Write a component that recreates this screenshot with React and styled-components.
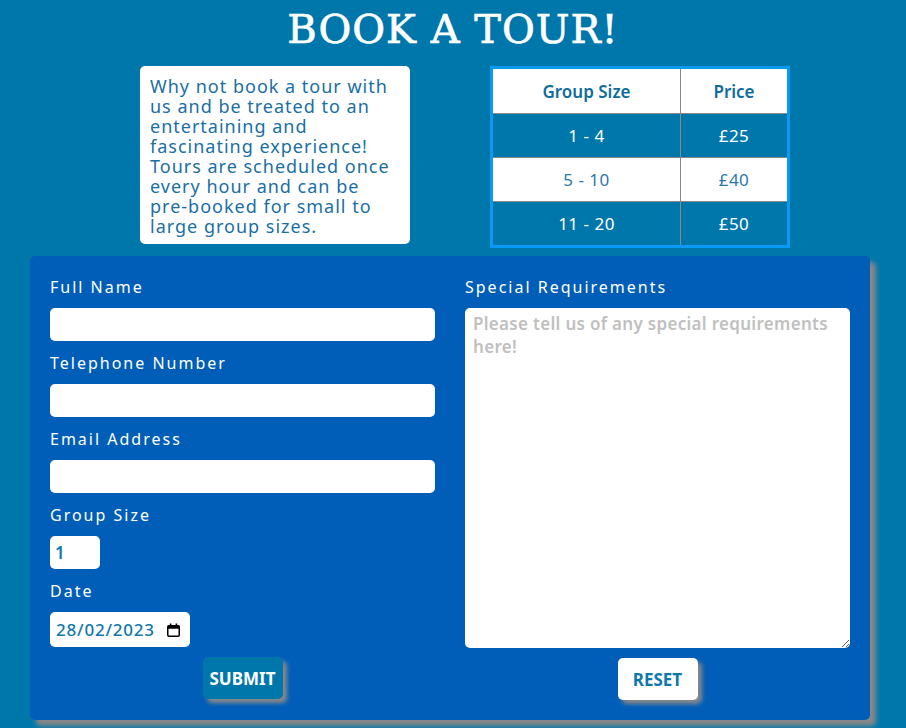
import React from "react";
import styled, { createGlobalStyle } from "styled-components";

const GlobalStyle = createGlobalStyle`
  body {
    margin: 0;
    background: #0077aa;
    font-family: "Noto Sans", "Open Sans", sans-serif;
  }
`;

const rates = [
  { size: "1 - 4", price: "£25" },
  { size: "5 - 10", price: "£40" },
  { size: "11 - 20", price: "£50" },
];

function CalendarIcon() {
  return (
    <svg width="13" height="14" viewBox="0 0 13 14">
      <rect x="0.75" y="2.75" width="11.5" height="10.5" rx="1.2" fill="none" stroke="#000" strokeWidth="1.5" />
      <rect x="0.75" y="2.75" width="11.5" height="3" fill="#000" />
      <rect x="2.8" y="0.5" width="1.6" height="3" fill="#000" />
      <rect x="8.6" y="0.5" width="1.6" height="3" fill="#000" />
    </svg>
  );
}

export default function App() {
  return (
    <Page>
      <GlobalStyle />
      <Title>BOOK A TOUR!</Title>

      <IntroRow>
        <InfoBox>
          Why not book a tour with us and be treated to an entertaining and
          fascinating experience! Tours are scheduled once every hour and can
          be pre&#8209;booked for small to large group sizes.
        </InfoBox>

        <PriceTable>
          <thead>
            <tr>
              <HeadCell>Group Size</HeadCell>
              <HeadCell>Price</HeadCell>
            </tr>
          </thead>
          <tbody>
            {rates.map((rate, index) => (
              <Row key={rate.size} $dark={index % 2 === 0}>
                <Cell>{rate.size}</Cell>
                <Cell>{rate.price}</Cell>
              </Row>
            ))}
          </tbody>
        </PriceTable>
      </IntroRow>

      <FormPanel>
        <Column>
          <Label>Full Name</Label>
          <TextInput type="text" />
          <Label>Telephone Number</Label>
          <TextInput type="tel" />
          <Label>Email Address</Label>
          <TextInput type="email" />
          <Label>Group Size</Label>
          <SmallInput type="text" defaultValue="1" />
          <Label>Date</Label>
          <DateField>
            <DateText type="text" defaultValue="28/02/2023" />
            <CalendarIcon />
          </DateField>
          <ButtonRow>
            <Button type="button">SUBMIT</Button>
          </ButtonRow>
        </Column>

        <Column>
          <Label>Special Requirements</Label>
          <Notes placeholder="Please tell us of any special requirements here!" />
          <ButtonRow>
            <Button type="button" $light>RESET</Button>
          </ButtonRow>
        </Column>
      </FormPanel>
    </Page>
  );
}

const Page = styled.div`
  padding-bottom: 8px;
`;

const Title = styled.h1`
  margin: 0;
  padding-top: 6px;
  height: 60px;
  box-sizing: border-box;
  text-align: center;
  font-family: "DejaVu Serif", "Liberation Serif", serif;
  font-weight: 400;
  font-size: 40px;
  letter-spacing: 1px;
  line-height: 46px;
  color: #fff;
  -webkit-text-stroke: 0.7px #fff;
`;

const IntroRow = styled.div`
  display: flex;
  justify-content: center;
  align-items: flex-start;
  gap: 80px;
  padding-left: 24px;
  margin-top: 6px;
`;

const InfoBox = styled.p`
  box-sizing: border-box;
  width: 270px;
  margin: 0;
  padding: 10px 6px 8px 10px;
  background: #fff;
  border-radius: 5px;
  color: #1a6fa3;
  font-size: 18px;
  line-height: 20px;
  letter-spacing: 1px;
`;

const PriceTable = styled.table`
  width: 300px;
  border-collapse: collapse;
  border: 3px solid #0a9af5;
  font-size: 17px;
`;

const HeadCell = styled.th`
  height: 44px;
  padding: 0;
  background: #fff;
  color: #0f6c9c;
  font-weight: 600;
  border-left: 1px solid #888;
  border-bottom: 1px solid #888;

  &:first-child {
    width: 187px;
    border-left: none;
  }
`;

const Row = styled.tr`
  background: ${(p) => (p.$dark ? "#0077aa" : "#fff")};
  color: ${(p) => (p.$dark ? "#fff" : "#2a78a6")};
`;

const Cell = styled.td`
  height: 43px;
  padding: 0;
  text-align: center;
  letter-spacing: 0.5px;
  border-left: 1px solid #888;
  border-bottom: 1px solid #888;

  &:first-child {
    border-left: none;
  }
`;

const FormPanel = styled.form`
  box-sizing: border-box;
  width: 840px;
  margin: 8px 0 0 30px;
  padding: 20px 20px 20px;
  background: #005eb8;
  border-radius: 5px;
  box-shadow: 6px 6px 5px #888;
  display: grid;
  grid-template-columns: 1fr 1fr;
  column-gap: 30px;
`;

const Column = styled.div`
  display: flex;
  flex-direction: column;
  align-items: flex-start;
`;

const Label = styled.label`
  display: block;
  color: #fff;
  font-size: 16px;
  letter-spacing: 2px;
  line-height: 22px;
  margin-bottom: 10px;
`;

const fieldBase = `
  box-sizing: border-box;
  border: none;
  border-radius: 5px;
  background: #fff;
  font-family: "Noto Sans", "Open Sans", sans-serif;
  font-size: 17px;
  font-weight: 600;
  color: #0f78ad;
  outline: none;
`;

const TextInput = styled.input`
  ${fieldBase}
  width: 100%;
  height: 33px;
  padding: 0 6px;
  margin-bottom: 11px;
`;

const SmallInput = styled.input`
  ${fieldBase}
  width: 50px;
  height: 33px;
  padding: 0 5px;
  margin-bottom: 11px;
`;

const DateField = styled.div`
  box-sizing: border-box;
  width: 140px;
  height: 35px;
  padding: 0 10px 0 6px;
  display: flex;
  align-items: center;
  background: #fff;
  border-radius: 5px;
`;

const DateText = styled.input`
  ${fieldBase}
  flex: 1;
  min-width: 0;
  padding: 0;
  font-weight: 500;
  letter-spacing: 0.8px;
`;

const Notes = styled.textarea`
  ${fieldBase}
  width: 100%;
  height: 340px;
  padding: 4px 8px;
  resize: vertical;
  line-height: 23px;
  letter-spacing: 0.3px;

  &::placeholder {
    color: #c0c0c0;
  }
`;

const ButtonRow = styled.div`
  align-self: stretch;
  display: flex;
  justify-content: center;
  margin-top: 10px;
`;

const Button = styled.button`
  width: 80px;
  height: 42px;
  border: none;
  border-radius: 5px;
  background: ${(p) => (p.$light ? "#fff" : "#0077aa")};
  color: ${(p) => (p.$light ? "#0f78ad" : "#fff")};
  font-family: "Noto Sans", "Open Sans", sans-serif;
  font-size: 17px;
  font-weight: 700;
  box-shadow: 4px 4px 4px #888;
  cursor: pointer;
`;
